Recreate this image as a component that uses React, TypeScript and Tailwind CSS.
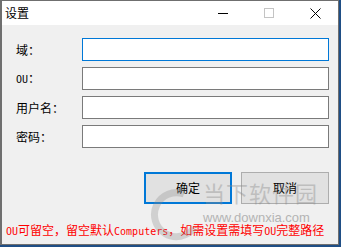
const fields = ["域：", "OU：", "用户名：", "密码："];

const Latin = ({ children }: { children: string }) => (
  <span className="font-['DejaVu_Sans_Mono',monospace] text-[10px]">{children}</span>
);

const App = () => {
  return (
    <div className="relative w-[341px] h-[247px] overflow-hidden bg-[#1f4e85] font-['Noto_Sans_CJK_SC',sans-serif]">
      <div className="w-[339px] h-[245px] border border-[#6f6f6f] border-l-2 bg-[#f0f0f0] flex flex-col">
        {/* title bar */}
        <div className="h-[24px] bg-white flex items-center">
          <span className="pl-[3px] text-[12px] leading-none text-black">设置</span>
          <div className="ml-auto flex h-full">
            <div className="w-[46px] flex items-center justify-center">
              <div className="w-[10px] h-px bg-black" />
            </div>
            <div className="w-[46px] flex items-center justify-center">
              <div className="w-[10px] h-[10px] border border-[#c4c4c4]" />
            </div>
            <div className="w-[46px] flex items-center justify-center">
              <svg width="11" height="11" viewBox="0 0 11 11">
                <path d="M0.5 0.5 L10.5 10.5 M10.5 0.5 L0.5 10.5" stroke="#000" strokeWidth="1" />
              </svg>
            </div>
          </div>
        </div>

        {/* form */}
        <div className="flex flex-col gap-[6px] pt-[13px] pl-[14px] pr-[9px]">
          {fields.map((label, i) => (
            <div key={label} className="flex items-center h-[23px]">
              <span className="w-[66px] text-[12px] leading-none text-black">
                {label === "OU：" ? (
                  <>
                    <Latin>OU</Latin>：
                  </>
                ) : (
                  label
                )}
              </span>
              <div
                className={
                  i === 0
                    ? "flex-1 h-[23px] bg-white border border-[#0078d7]"
                    : "flex-1 h-[23px] bg-white border border-[#7a7a7a]"
                }
              />
            </div>
          ))}
        </div>

        <div className="flex justify-end gap-[9px] pt-[24px] pr-[9px]">
          <button className="w-[88px] h-[32px] bg-[#e1e1e1] border-2 border-[#0078d7] text-[12px] text-black">
            确定
          </button>
          <button className="w-[88px] h-[32px] bg-[#e1e1e1] border border-[#adadad] text-[12px] text-black">
            取消
          </button>
        </div>

        <div className="pt-[20px] pl-[4px] text-[12px] leading-none text-[#ff0000] whitespace-nowrap">
          <Latin>OU</Latin>可留空，留空默认<Latin>Computers</Latin>，如需设置需填写<Latin>OU</Latin>完整路径
        </div>
      </div>

      {/* watermark */}
      <svg className="absolute left-[150px] top-[188px] opacity-30" width="50" height="56" viewBox="0 0 50 56">
        <path d="M34 6 A22 22 0 1 0 44 40" fill="none" stroke="#8a8a8a" strokeWidth="7" />
      </svg>
      <div className="absolute left-[203px] top-[181px] text-[22px] tracking-[1px] leading-none text-[#8c8c8c] opacity-40">
        当下软件园
      </div>
      <div className="absolute left-[203px] top-[211px] text-[13px] leading-none text-[#8c8c8c] opacity-60 font-['Liberation_Sans',sans-serif]">
        www.downxia.com
      </div>
    </div>
  );
};

export default App;
